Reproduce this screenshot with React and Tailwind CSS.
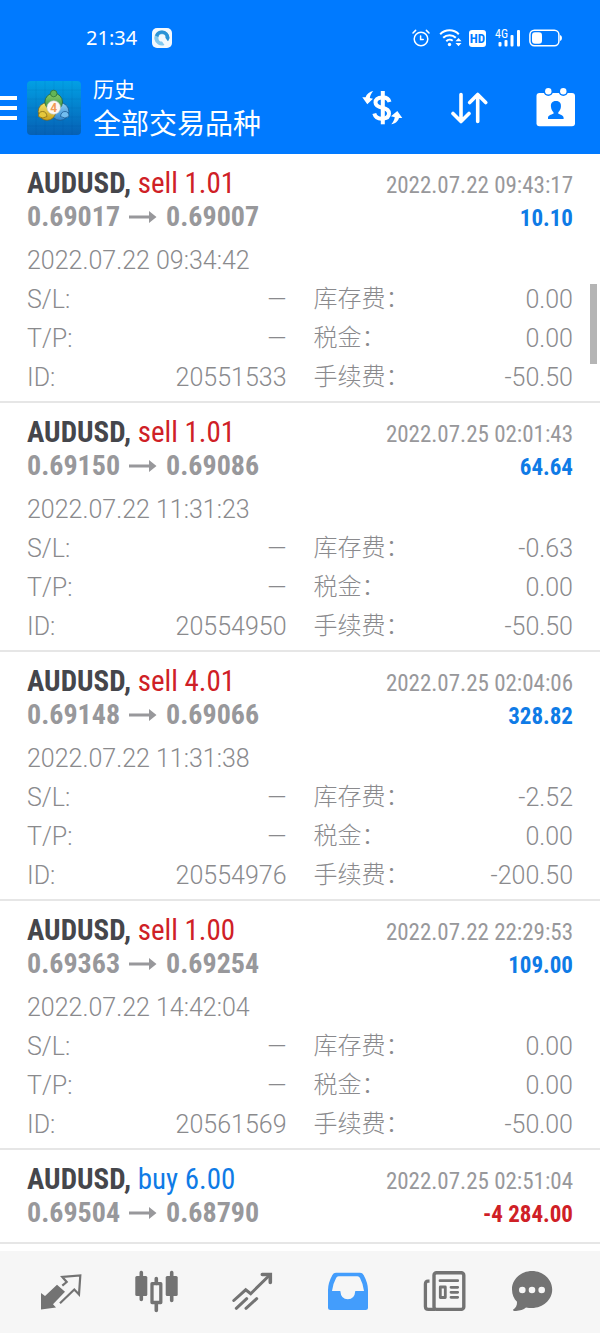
const deals = [
	{ symbol: 'AUDUSD', side: 'sell', volume: '1.01', open: '0.69017', close: '0.69007', closeTime: '2022.07.22 09:43:17', profit: '10.10', openTime: '2022.07.22 09:34:42', id: '20551533', swap: '0.00', tax: '0.00', fee: '-50.50' },
	{ symbol: 'AUDUSD', side: 'sell', volume: '1.01', open: '0.69150', close: '0.69086', closeTime: '2022.07.25 02:01:43', profit: '64.64', openTime: '2022.07.22 11:31:23', id: '20554950', swap: '-0.63', tax: '0.00', fee: '-50.50' },
	{ symbol: 'AUDUSD', side: 'sell', volume: '4.01', open: '0.69148', close: '0.69066', closeTime: '2022.07.25 02:04:06', profit: '328.82', openTime: '2022.07.22 11:31:38', id: '20554976', swap: '-2.52', tax: '0.00', fee: '-200.50' },
	{ symbol: 'AUDUSD', side: 'sell', volume: '1.00', open: '0.69363', close: '0.69254', closeTime: '2022.07.22 22:29:53', profit: '109.00', openTime: '2022.07.22 14:42:04', id: '20561569', swap: '0.00', tax: '0.00', fee: '-50.00' },
	{ symbol: 'AUDUSD', side: 'buy', volume: '6.00', open: '0.69504', close: '0.68790', closeTime: '2022.07.25 02:51:04', profit: '-4 284.00' },
]

const StatusBar = () => {
	return (
		<div className="flex h-[76px] items-center justify-between pl-[86px] pr-[38px]">
			<div className="flex items-center gap-[15px]">
				<span className="font-['Noto_Sans',sans-serif] text-[20px] leading-6">21:34</span>
				<svg className="h-5 w-5" viewBox="0 0 20 20">
					<rect width="20" height="20" rx="5" fill="#f4f9fd" />
					<path d="M10 2.5a7.5 7.5 0 1 0 2.5 14.5L10 13.5a3.6 3.6 0 1 1 3.6-3.6l2.4 3.4 1.5-3.3A7.5 7.5 0 0 0 10 2.5z" fill="#83c9ee" />
					<path d="M10 2.5A7.5 7.5 0 0 1 17.5 10L16 13.3l-2.4-3.4A3.6 3.6 0 0 0 6.4 9L3 7.5a7.5 7.5 0 0 1 7-5z" fill="#2b93d6" />
				</svg>
			</div>
			<div className="flex items-center gap-[9px]">
				<svg className="h-[18px] w-[18px]" viewBox="0 0 18 18" fill="none" stroke="currentColor" strokeWidth="1.5" strokeLinecap="round">
					<circle cx="9" cy="10" r="6.8" />
					<path d="M8.6 7v3.6h2.6M1 4l2.6-2.6M17 4l-2.6-2.6" />
				</svg>
				<svg className="h-[18px] w-[24px]" viewBox="0 0 24 18" fill="none" stroke="currentColor" strokeWidth="2">
					<path d="M1.2 5.2a13.2 13.2 0 0 1 18.6 0M4.2 8.8a8.8 8.8 0 0 1 12.6 0M7.3 12.2a4.8 4.8 0 0 1 6.4-.5" />
					<circle cx="10.5" cy="15.5" r="1.7" fill="currentColor" stroke="none" />
					<path d="M16.5 12.3l3-3.3 3 3.3zM16.5 14l3 3.3 3-3.3z" fill="currentColor" stroke="none" />
				</svg>
				<span className="-ml-[3px] flex h-[17px] w-[17px] items-center justify-center rounded-[3px] bg-white font-['Roboto_Condensed',Roboto,sans-serif] text-[13px] font-bold leading-none text-[#007aff]">HD</span>
				<div className="flex items-end">
					<span className="-mr-[10px] self-start font-['Roboto_Condensed',Roboto,sans-serif] text-[12px] leading-[10px]">4G</span>
					<svg className="h-[18px] w-[22px]" viewBox="0 0 22 18" fill="currentColor">
						<rect x="0.5" y="13" width="3" height="4.5" rx="1" />
						<rect x="6.5" y="11" width="3" height="6.5" rx="1" />
						<rect x="12.5" y="6" width="3" height="11.5" rx="1" />
						<rect x="19" y="1" width="3" height="16.5" rx="1" />
					</svg>
				</div>
				<svg className="h-[18px] w-[33px]" viewBox="0 0 33 18">
					<rect x="0.9" y="1.2" width="29" height="15.6" rx="4.5" fill="none" stroke="currentColor" strokeWidth="1.5" />
					<rect x="3" y="3.2" width="10" height="11.6" rx="3" fill="currentColor" />
					<path d="M31 6q2 .5 2 3t-2 3z" fill="currentColor" />
				</svg>
			</div>
		</div>
	)
}

const AppLogo = () => {
	return (
		<svg className="h-[54px] w-[54px]" viewBox="0 0 54 54">
			<defs>
				<linearGradient id="logoBg" x1="0" y1="0" x2="0" y2="1">
					<stop offset="0" stopColor="#02a0e4" />
					<stop offset="1" stopColor="#0660b4" />
				</linearGradient>
				<linearGradient id="logoGreen" x1="0" y1="0" x2="0" y2="1">
					<stop offset="0" stopColor="#8ccf6c" />
					<stop offset="1" stopColor="#2e8a3c" />
				</linearGradient>
				<linearGradient id="logoYellow" x1="0" y1="0" x2="0" y2="1">
					<stop offset="0" stopColor="#f5e36a" />
					<stop offset="1" stopColor="#c9a21c" />
				</linearGradient>
				<linearGradient id="logoBlue" x1="0" y1="0" x2="0" y2="1">
					<stop offset="0" stopColor="#8fd0f5" />
					<stop offset="1" stopColor="#2f86d0" />
				</linearGradient>
			</defs>
			<rect width="54" height="54" rx="4" fill="url(#logoBg)" />
			<path d="M9 0v54M18 0v54M27 0v54M36 0v54M45 0v54M0 9h54M0 18h54M0 27h54M0 36h54M0 45h54" stroke="#063f80" strokeOpacity="0.08" />
			<circle cx="33" cy="30.5" r="8.8" fill="url(#logoBlue)" stroke="#1c5488" strokeWidth="0.7" />
			<circle cx="20" cy="30.5" r="8.800" fill="url(#logoYellow)" stroke="#7c6314" strokeWidth="0.7" />
			<circle cx="26.7" cy="21" r="8.800" fill="url(#logoGreen)" stroke="#245f2b" strokeWidth="0.7" />
			<circle cx="26.7" cy="12.5" r="3.300" fill="#63b556" stroke="#2f7336" strokeWidth="0.8" />
			<path d="M11.500 35.500q0-5 4-5t4.500 5q-4 3-8.500 0z" fill="#e5c83c" stroke="#866c17" strokeWidth="0.8" />
			<path d="M33.500 35.500q.5-5 4.500-5t4 5q-4 3-8.500 0z" fill="#72bdf0" stroke="#1c5c94" strokeWidth="0.8" />
			<circle cx="26.7" cy="26.5" r="6.800" fill="#fdf8f2" stroke="#b9c7cc" strokeWidth="0.6" />
			<text x="26.7" y="31" textAnchor="middle" fontFamily="Roboto, sans-serif" fontSize="12" fontWeight="700" fill="#f29a55">4</text>
		</svg>
	)
}

const Header = () => {
	return (
		<header className="bg-[#007aff] text-white">
			<StatusBar />
			<div className="flex h-[78px] items-start justify-between pr-6">
				<div className="flex items-start pt-[5px]">
					<button type="button" aria-label="Menu" className="mt-[15px] flex w-[17px] flex-col gap-[6px]">
						<span className="h-1 w-full bg-white" />
						<span className="h-1 w-full bg-white" />
						<span className="h-1 w-full bg-white" />
					</button>
					<div className="ml-[10px]"><AppLogo /></div>
					<div className="-mt-1 ml-3">
						<p className="text-[21px] leading-[26px]">历史</p>
						<h1 className="mt-1 text-[28px] leading-9">全部交易品种</h1>
					</div>
				</div>
				<div className="flex gap-12 pt-3">
					<button type="button" aria-label="Currency">
						<svg className="h-10 w-[41px]" viewBox="0 0 41 40" fill="none" stroke="currentColor" strokeWidth="4">
							<path d="M20.8 3v33.3" />
							<path d="M27.5 14c-1-3.500-3.500-4.700-7-4.500-4.300.2-7 2-7 5 0 3.500 3.500 4.500 7 5.300 4 .9 6.500 2.200 6.500 5.700 0 3.200-2.500 5-6.700 5.200-4.300.2-7-1.500-8-5.200" />
							<path d="M11.3 3C7.5 3.6 4.5 6 3.600 9.300L.3 9.200l5 7.100 5.700-5.500-3.200-.8C8.300 7.400 9.500 5 11.300 3z" fill="currentColor" stroke="none" />
							<path d="M29.3 36.3c3.800-.6 6.800-3 7.700-6.300l3.300.1-5-7.100-6.300 5.200 3.800 1.100c-.5 2.600-1.700 5-3.500 7z" fill="currentColor" stroke="none" />
						</svg>
					</button>
					<button type="button" aria-label="Sort">
						<svg className="h-10 w-[37px]" viewBox="0 0 37 40" fill="none" stroke="currentColor" strokeWidth="3.6" strokeLinecap="round" strokeLinejoin="round">
							<path d="M10 6.5v27M2 25.5l8 8 8-8M26.7 33.5v-27M18.7 14.5l8-8 8 8" />
						</svg>
					</button>
					<button type="button" aria-label="Period">
						<svg className="h-10 w-10" viewBox="0 0 40 40">
							<rect x="0.5" y="5" width="38.5" height="33.2" rx="3" fill="currentColor" />
							<circle cx="12.3" cy="3.2" r="4.8" fill="#007aff" />
							<circle cx="27.3" cy="3.2" r="4.8" fill="#007aff" />
							<circle cx="12.3" cy="3.2" r="3.2" fill="currentColor" />
							<circle cx="27.3" cy="3.2" r="3.2" fill="currentColor" />
							<path d="M20 13c-4 0-5.5 2.5-5 6 .3 2.5 1.2 4 2.5 5.2v1.5c-2.5 1-5.5 1.5-5.5 4V31h15.6v-1.3c0-2.5-3-3-5.3-4v-1.5c1.3-1.2 2.3-2.7 2.6-5.2.4-3.5-1-6-4.9-6z" fill="#007aff" />
						</svg>
					</button>
				</div>
			</div>
		</header>
	)
}

const Field = ({ label, value }) => {
	return (
		<div className="flex justify-between">
			<dt>{label}</dt>
			<dd className="text-[25px]">{value}</dd>
		</div>
	)
}

const Deal = ({ deal }) => {
	return (
		<li className={deal.id ? 'border-b-2 border-[#e6e6e6] px-[27px] pb-1 pt-[13px]' : 'border-b-2 border-[#e6e6e6] px-[27px] pb-[11px] pt-[13px]'}>
			<div className="flex justify-between font-['Roboto_Condensed',Roboto,sans-serif] leading-[33px] text-[#98989b]">
				<div>
					<h2 className="text-[29px] font-bold text-[#45464b]">
						{deal.symbol}, <span className={deal.side === 'sell' ? 'font-normal text-[#cf2026]' : 'font-normal text-[#0f7be6]'}>{deal.side} {deal.volume}</span>
					</h2>
					<p className="flex items-center text-[28px] font-bold">
						{deal.open}
						<svg className="mx-[9px] h-3 w-7" viewBox="0 0 28 12" fill="currentColor" role="img" aria-label="to">
							<path d="M0 4.5h20V0l7.5 6-7.5 6V7.5H0z" />
						</svg>
						{deal.close}
					</p>
				</div>
				<div className="pt-[2px] text-right text-[23px]">
					<p>{deal.closeTime}</p>
					<p className={deal.profit.startsWith('-') ? 'font-bold text-[#cf2026]' : 'font-bold text-[#0f7be6]'}>{deal.profit}</p>
				</div>
			</div>
			{deal.id && (
				<div className="pt-[6px] font-light leading-[39px] text-[#8a8a8d]">
					<p className="text-[25px]">{deal.openTime}</p>
					<div className="grid grid-cols-2 gap-[27px]">
						<dl className="text-[25px]">
							<Field label="S/L:" value="—" />
							<Field label="T/P:" value="—" />
							<Field label="ID:" value={deal.id} />
						</dl>
						<dl className="text-[24px]">
							<Field label="库存费：" value={deal.swap} />
							<Field label="税金：" value={deal.tax} />
							<Field label="手续费：" value={deal.fee} />
						</dl>
					</div>
				</div>
			)}
		</li>
	)
}

const TabIcon = ({ children }) => {
	return (
		<svg className="h-11 w-11" viewBox="0 0 44 44" fill="none" stroke="currentColor">{children}</svg>
	)
}

const TabBar = () => {
	return (
		<nav className="grid h-[82px] grid-cols-[repeat(5,16fr)_13fr] items-center justify-items-center bg-[#f6f6f6] pl-[13px] pr-[29px] text-[#737373]">
			<button type="button" aria-label="Quotes">
				<TabIcon>
					<path d="M2 23v16.5l15-2-3-3.2 12-12.5-8-7L6 26z" fill="currentColor" stroke="none" />
					<path d="M23.3 15.7l4.4-3.7-4.4-5 18-1.5L40 24.5l-4.7-5L21 33.3" strokeWidth="2.2" />
				</TabIcon>
			</button>
			<button type="button" aria-label="Charts">
				<TabIcon>
					<path d="M6.3 2.5v27M36.7 2.5v28M21.3 8.5v5M21.3 33v7.5" strokeWidth="3.6" strokeLinecap="round" />
					<rect x="0.3" y="6" width="12" height="20" rx="1.5" fill="currentColor" stroke="none" />
					<rect x="30.7" y="6" width="12" height="20" rx="1.5" fill="currentColor" stroke="none" />
					<rect x="17" y="13.7" width="8.8" height="18.8" strokeWidth="3.3" strokeLinejoin="round" />
				</TabIcon>
			</button>
			<button type="button" aria-label="Trade">
				<TabIcon>
					<path d="M2.8 30.5l11.9-10.7 5 3.9L38.5 5.2M5.3 38.3l10.4-9.6M15 38.3l10.7-9.6" strokeWidth="3" strokeLinecap="round" />
					<path d="M31.3 4.5h8v8" strokeWidth="3.6" strokeLinecap="round" />
				</TabIcon>
			</button>
			<button type="button" aria-label="History" aria-current="page" className="text-[#439dfc]">
				<TabIcon>
					<path fillRule="evenodd" d="M9 2.8h24q2.5 0 3.6 2.2Q41 13 41 20v17.5q0 2.5-2.5 2.5h-35Q1 40 1 37.5V20Q1 13 5.4 5 6.5 2.8 9 2.8zM11.5 6.3q-1.6 0-2.4 1.7Q5.8 14 5 21h8.3q.7 8.3 7.5 8.3t7.5-8.3H37q-.8-7-4-13-.9-1.7-2.500-1.700z" fill="currentColor" stroke="none" />
				</TabIcon>
			</button>
			<button type="button" aria-label="News">
				<TabIcon>
					<rect x="11" y="2.7" width="29.8" height="36.7" rx="2.5" strokeWidth="3.4" />
					<path d="M6.5 11.2H5q-2.6 0-2.6 2.8v22.5q0 2.9 3 2.9h7" strokeWidth="3.3" />
					<path d="M17 10.7h17.7M28 17.3h6.7M28 22.3h6.7M28 27.3h6.7" strokeWidth="2.8" strokeLinecap="round" />
					<rect x="17.3" y="17" width="5" height="10.5" strokeWidth="2.8" strokeLinejoin="round" />
				</TabIcon>
			</button>
			<button type="button" aria-label="Messages">
				<TabIcon>
					<path fillRule="evenodd" d="M22 1C10.8 1 2 9.3 2 19.5c0 5.5 2 9.300 5 12.300.3 3.500-1.300 6.500-4 8 0 1.200 1.300 1.400 3 1.200 4-.5 7.500-1.500 10-3.600 2 .5 4 .6 6 .6 11.200 0 20.200-8.300 20.200-18.500S33.200 1 22 1zM12.300 16.700a3.300 3.300 0 1 1 0 6.600 3.300 3.300 0 0 1 0-6.600zm9.700 0a3.300 3.300 0 1 1 0 6.600 3.300 3.300 0 0 1 0-6.600zm9.700 0a3.300 3.300 0 1 1 0 6.600 3.300 3.300 0 0 1 0-6.600z" fill="currentColor" stroke="none" />
				</TabIcon>
			</button>
		</nav>
	)
}

export default function App() {
	return (
		<div lang="zh-CN" className="flex min-h-screen flex-col bg-white font-[Roboto,'Noto_Sans_CJK_SC',sans-serif]">
			<Header />
			<main className="relative flex-1">
				<ul>
					{deals.map((deal) => (
						<Deal key={deal.closeTime} deal={deal} />
					))}
				</ul>
				<div className="absolute right-[3px] top-[130px] h-20 w-[7px] bg-[#b5b5b5]" />
			</main>
			<TabBar />
		</div>
	)
}
